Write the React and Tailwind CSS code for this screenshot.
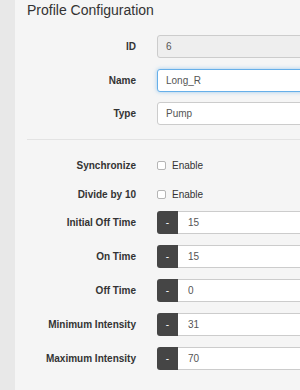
import React from 'react';

const font = { fontFamily: '"Liberation Sans", Arial, Helvetica, sans-serif' };

const Row = ({ label, top, children }) => (
    <div className={`flex items-center h-[23px] ${top}`}>
        <label className="w-[109px] shrink-0 text-right text-[10px] font-bold text-[#333]">{label}</label>
        <div className="ml-[21px] flex shrink-0 items-center">{children}</div>
    </div>
);

const TextBox = ({ value, disabled, focused }) => {
    let cls = 'h-[23px] w-[400px] shrink-0 rounded-[3px] border text-[10px] text-[#555] px-[8px] outline-none ';
    if (disabled) cls += 'bg-[#eeeeee] border-[#cccccc]';
    else if (focused) cls += 'bg-white border-[#66afe9] shadow-[0_0_4px_rgba(102,175,233,0.6)]';
    else cls += 'bg-white border-[#cccccc] px-[6px]';
    return <input className={cls} style={font} defaultValue={value} disabled={disabled} readOnly />;
};

const Stepper = ({ value }) => (
    <div className="flex h-[23px] shrink-0">
        <button className="w-[21px] h-full shrink-0 rounded-l-[3px] bg-[#454545] text-white text-[10px] leading-none" style={font}>
            -
        </button>
        <input
            className="h-full w-[400px] shrink-0 border border-l-0 border-[#cccccc] bg-white px-[10px] text-[10px] text-[#555] outline-none"
            style={font}
            defaultValue={value}
            readOnly
        />
    </div>
);

const Check = ({ label, top }) => (
    <div className={`flex items-center h-[23px] ${top}`}>
        <span className="w-[109px] shrink-0 text-right text-[10px] font-bold text-[#333]">{label}</span>
        <div className="ml-[21px] flex items-center">
            <span className="w-[9px] h-[9px] rounded-[2px] border border-[#b5b5b5] bg-white"></span>
            <span className="ml-[6px] text-[10px] text-[#333]">Enable</span>
        </div>
    </div>
);

const App = () => {
    return (
        <div className="w-[300px] h-[390px] overflow-hidden flex" style={font}>
            <div className="w-[15px] shrink-0 bg-[#e8e8e8]"></div>
            <div className="flex-1 min-w-0 bg-[#f5f5f5] pl-[12px] overflow-hidden">
                <h2 className="h-[20px] leading-[20px] text-[14px] font-light text-[#333] whitespace-nowrap">Profile Configuration</h2>

                <Row label="ID" top="mt-[15px]">
                    <TextBox value="6" disabled />
                </Row>
                <Row label="Name" top="mt-[11px]">
                    <TextBox value="Long_R" focused />
                </Row>
                <Row label="Type" top="mt-[10px]">
                    <TextBox value="Pump" />
                </Row>

                <div className="mt-[14px] h-px w-[300px] bg-[#e3e3e3]"></div>

                <Check label="Synchronize" top="mt-[14px]" />
                <Check label="Divide by 10" top="mt-[6px]" />

                <Row label="Initial Off Time" top="mt-[5px]">
                    <Stepper value="15" />
                </Row>
                <Row label="On Time" top="mt-[11px]">
                    <Stepper value="15" />
                </Row>
                <Row label="Off Time" top="mt-[11px]">
                    <Stepper value="0" />
                </Row>
                <Row label="Minimum Intensity" top="mt-[11px]">
                    <Stepper value="31" />
                </Row>
                <Row label="Maximum Intensity" top="mt-[11px]">
                    <Stepper value="70" />
                </Row>
            </div>
        </div>
    );
};

export default App;
